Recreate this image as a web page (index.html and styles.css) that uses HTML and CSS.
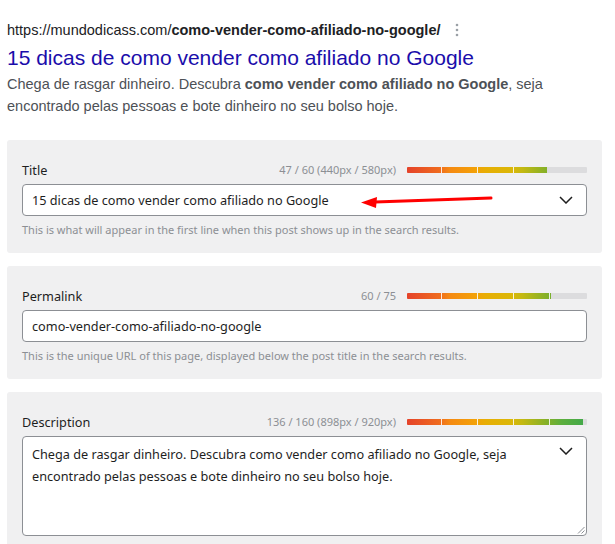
FILE: index.html
```html
<!DOCTYPE html>
<html lang="pt">
<head>
<meta charset="utf-8">
<title>Snippet preview</title>
<link rel="stylesheet" href="styles.css">
</head>
<body>
<div class="page">
  <div class="serp">
    <div class="url-row">
      <span class="url">https://mundodicass.com/<b>como-vender-como-afiliado-no-google/</b></span>
      <svg class="kebab" width="4" height="14" viewBox="0 0 4 14"><circle cx="2" cy="2" r="1.3"/><circle cx="2" cy="7" r="1.3"/><circle cx="2" cy="12" r="1.3"/></svg>
    </div>
    <div class="serp-title">15 dicas de como vender como afiliado no Google</div>
    <p class="serp-desc">Chega de rasgar dinheiro. Descubra <b>como vender como afiliado no Google</b>, seja encontrado pelas pessoas e bote dinheiro no seu bolso hoje.</p>
  </div>

  <section class="card">
    <div class="field-head">
      <span class="label">Title</span>
      <div class="meter">
        <span class="count">47 / 60 (440px / 580px)</span>
        <div class="bar"><div class="fill" style="width:78%"></div></div>
      </div>
    </div>
    <div class="field">
      <span class="value">15 dicas de como vender como afiliado no Google</span>
      <svg class="chevron" width="14" height="8" viewBox="0 0 14 8"><path d="M1 1 L7 7 L13 1"/></svg>
      <svg class="arrow" width="140" height="14" viewBox="0 0 140 14"><path class="arrow-line" d="M130 3 L14 7"/><path class="arrow-head" d="M0 7.5 L16 2 L15 13 Z"/></svg>
    </div>
    <p class="help">This is what will appear in the first line when this post shows up in the search results.</p>
  </section>

  <section class="card">
    <div class="field-head">
      <span class="label">Permalink</span>
      <div class="meter">
        <span class="count">60 / 75</span>
        <div class="bar"><div class="fill" style="width:80%"></div></div>
      </div>
    </div>
    <div class="field">
      <span class="value">como-vender-como-afiliado-no-google</span>
    </div>
    <p class="help">This is the unique URL of this page, displayed below the post title in the search results.</p>
  </section>

  <section class="card">
    <div class="field-head">
      <span class="label">Description</span>
      <div class="meter">
        <span class="count">136 / 160 (898px / 920px)</span>
        <div class="bar"><div class="fill" style="width:97.6%"></div></div>
      </div>
    </div>
    <div class="field area">
      <span class="value">Chega de rasgar dinheiro. Descubra como vender como afiliado no Google, seja encontrado pelas pessoas e bote dinheiro no seu bolso hoje.</span>
      <svg class="chevron" width="14" height="8" viewBox="0 0 14 8"><path d="M1 1 L7 7 L13 1"/></svg>
      <svg class="grip" width="8" height="8" viewBox="0 0 8 8"><path d="M7.5 1 L1 7.5 M7.5 4.5 L4.5 7.5"/></svg>
    </div>
  </section>
</div>
</body>
</html>
```

FILE: styles.css
```css
html, body {
  margin: 0;
  padding: 0;
  background: #ffffff;
}

.page {
  width: 595px;
  margin-left: 7px;
  padding-top: 20px;
}

/* SERP preview */
.serp {
  font-family: "Liberation Sans", Arial, sans-serif;
  margin-bottom: 23px;
}

.url-row {
  display: flex;
  align-items: center;
  height: 20px;
}

.url {
  font-size: 14.5px;
  color: #202124;
  line-height: 20px;
  white-space: nowrap;
}

.url b {
  font-weight: bold;
}

.kebab {
  margin-left: 15px;
  fill: #9aa0a6;
}

.serp-title {
  margin-top: 5px;
  font-size: 21px;
  line-height: 26px;
  color: #1a0dab;
}

.serp-desc {
  margin: 2px 0 0;
  font-size: 14.5px;
  line-height: 22px;
  color: #4d5156;
}

.serp-desc b {
  color: #4d5156;
  font-weight: bold;
}

/* Cards */
.card {
  background: #f0f0f1;
  border-radius: 3px;
  padding: 21px 15px 15px;
  margin-bottom: 13px;
  font-family: "Noto Sans", "Open Sans", sans-serif;
}

.field-head {
  display: flex;
  align-items: center;
  justify-content: space-between;
  height: 18px;
}

.label {
  font-size: 12.7px;
  line-height: 18px;
  color: #1e1e1e;
}

.meter {
  display: flex;
  align-items: center;
  gap: 11px;
}

.count {
  font-size: 11px;
  line-height: 16px;
  color: #8c8f94;
}

.bar {
  width: 180px;
  height: 6px;
  border-radius: 1px;
  background: #dcdcde;
  overflow: hidden;
}

.fill {
  height: 100%;
  background:
    repeating-linear-gradient(90deg, transparent 0 35px, rgba(255,255,255,0.85) 35px 36px),
    linear-gradient(90deg, #e5432a 0%, #ef6b1e 18%, #f58a12 24%, #f3a108 38%, #e7ae04 44%, #dbb708 58%, #c4b912 64%, #82b029 78%, #5caf3e 86%, #3fa84b 100%);
  background-size: auto, 180px 100%;
  background-position: -1px 0, 0 0;
  background-repeat: repeat, no-repeat;
}

.field {
  position: relative;
  margin-top: 5px;
  height: 32px;
  box-sizing: border-box;
  background: #ffffff;
  border: 1px solid #8c8f94;
  border-radius: 4px;
  padding: 0 40px 0 9px;
  display: flex;
  align-items: center;
}

.value {
  font-size: 12.7px;
  color: #1e1e1e;
  line-height: 22px;
}

.chevron {
  position: absolute;
  right: 13px;
  top: 11px;
  fill: none;
  stroke: #1e1e1e;
  stroke-width: 1.5;
}

.arrow {
  position: absolute;
  left: 338px;
  top: 10px;
  overflow: visible;
}

.arrow-line {
  fill: none;
  stroke: #ff0000;
  stroke-width: 3;
  stroke-linecap: round;
}

.arrow-head {
  fill: #ff0000;
}

.field.area {
  height: 100px;
  align-items: flex-start;
  padding-top: 6px;
  padding-right: 44px;
}

.field.area .chevron {
  top: 10px;
}

.grip {
  position: absolute;
  right: 1px;
  bottom: 1px;
  fill: none;
  stroke: #8c8f94;
  stroke-width: 1;
}

.help {
  margin: 6px 0 0;
  font-size: 11px;
  line-height: 16px;
  color: #8c8f94;
}
```
